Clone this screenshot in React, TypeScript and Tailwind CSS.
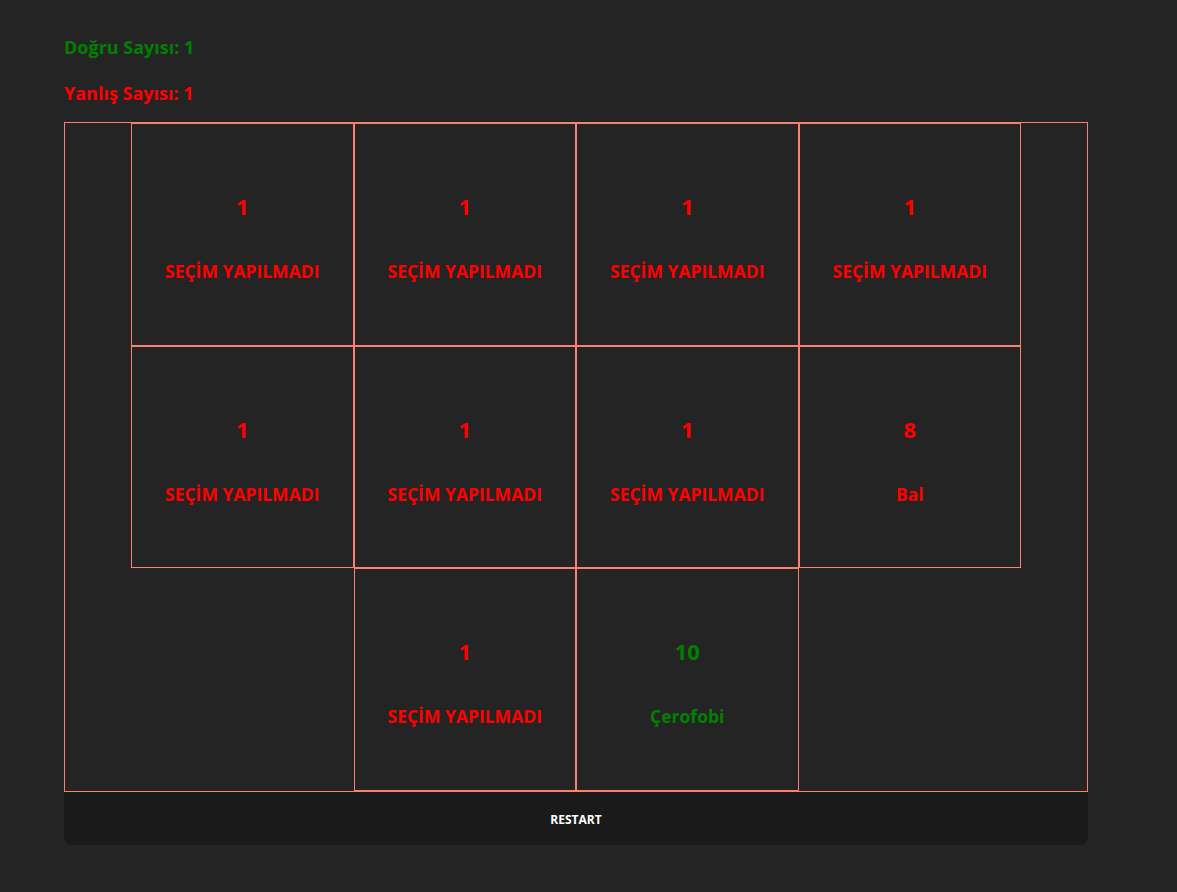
const cells = [
  { n: "1", label: "SEÇİM YAPILMADI", ok: false },
  { n: "1", label: "SEÇİM YAPILMADI", ok: false },
  { n: "1", label: "SEÇİM YAPILMADI", ok: false },
  { n: "1", label: "SEÇİM YAPILMADI", ok: false },
  { n: "1", label: "SEÇİM YAPILMADI", ok: false },
  { n: "1", label: "SEÇİM YAPILMADI", ok: false },
  { n: "1", label: "SEÇİM YAPILMADI", ok: false },
  { n: "8", label: "Bal", ok: false },
  { n: "1", label: "SEÇİM YAPILMADI", ok: false },
  { n: "10", label: "Çerofobi", ok: true },
];

export default function App() {
  return (
    <main className="min-h-screen bg-[#242424] px-16 pt-[36px] font-['Open_Sans',sans-serif]">
      <div className="w-[1024px]">
        <p className="text-[18px] font-bold leading-[22px] text-[#008000]">Doğru Sayısı: 1</p>
        <p className="mt-[24px] text-[18px] font-bold leading-[22px] text-[#ff0000]">Yanlış Sayısı: 1</p>
        <div className="mt-[18px] flex flex-wrap justify-center border border-[#fa8072]">
          {cells.map((c, i) => (
            <div
              key={i}
              className="flex h-[222.5px] w-[222.5px] flex-col items-center border border-[#fa8072] pt-[67px]"
            >
              <span className={`text-[22px] font-bold leading-[30px] ${c.ok ? "text-[#008000]" : "text-[#ff0000]"}`}>
                {c.n}
              </span>
              <span className={`mt-[39px] text-[17.5px] font-bold leading-[22px] ${c.ok ? "text-[#008000]" : "text-[#ff0000]"}`}>
                {c.label}
              </span>
            </div>
          ))}
        </div>
        <button className="flex h-[53px] w-full items-center justify-center rounded-b-lg bg-[#1a1a1a] pt-[3px] text-[12px] font-bold text-white">
          RESTART
        </button>
      </div>
    </main>
  );
}
